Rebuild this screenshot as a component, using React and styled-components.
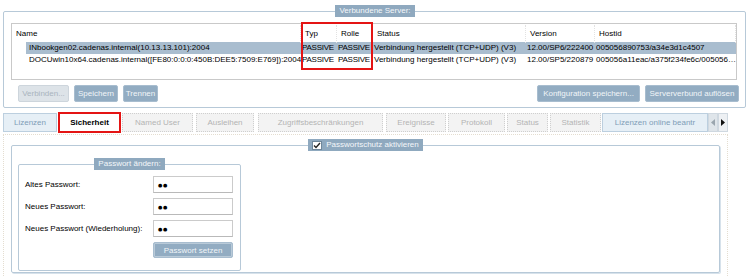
import React from 'react';
import styled, { createGlobalStyle, css } from 'styled-components';

const GlobalStyle = createGlobalStyle`
  body {
    margin: 0;
    background: #ffffff;
    font-family: "Liberation Sans", Arial, sans-serif;
    font-size: 8px;
    color: #000;
  }
`;

const Page = styled.div`
  width: 750px;
  height: 277px;
  box-sizing: border-box;
  padding: 5px 4px 0 3px;
  overflow: hidden;
`;

const Group = styled.fieldset`
  margin: 0;
  min-width: 0;
  border: 1px solid #b7c9d8;
  border-radius: 2px;
  padding: ${p => p.$pad};
  box-shadow: ${p => (p.$shadow ? '1px 1px 0 #d7e2eb' : 'none')};
`;

const Legend = styled.legend`
  margin: 0 auto;
  padding: 0 4px;
  height: 12px;
  line-height: 12px;
  background: #8fa9bf;
  color: #f4f7fa;
  display: flex;
  align-items: center;
  gap: 4px;
`;

const CheckBox = styled.span`
  width: 10px;
  height: 9px;
  background: #fff;
  border: 1px solid #6f879b;
  box-sizing: border-box;
  display: flex;
  align-items: center;
  justify-content: center;
`;

const TableWrap = styled.div`
  position: relative;
  margin-right: 2px;
  height: 57px;
  box-sizing: border-box;
  border: 1px solid #c9c9c9;
  background: #fff;
`;

const cols = '289px 36px 36px 153px 69px 1fr';

const HeadRow = styled.div`
  display: grid;
  grid-template-columns: ${cols};
  height: 17px;
  margin-top: 1px;
  align-items: center;
`;

const HeadCell = styled.div`
  padding-left: 4px;
  height: 100%;
  line-height: 18px;
  border-right: 1px dotted #e2e2e2;
  white-space: nowrap;
`;

const Row = styled.div`
  display: grid;
  grid-template-columns: ${cols};
  height: 12px;
  line-height: 12px;
  white-space: nowrap;
  background: ${p => (p.$selected ? 'linear-gradient(to right, transparent 14px, #a9bdcf 14px)' : 'transparent')};
`;

const Cell = styled.div`
  padding-left: ${p => p.$indent ?? 2}px;
  overflow: hidden;
  text-overflow: ${p => (p.$clip ? 'clip' : 'ellipsis')};
  letter-spacing: ${p => (p.$tight ? '-0.25px' : 'normal')};
`;

const RedMark = styled.div`
  position: absolute;
  left: 289px;
  top: -2px;
  width: 72px;
  height: 48px;
  border: 2px solid #e41414;
  box-sizing: border-box;
  pointer-events: none;
`;

const ButtonRow = styled.div`
  display: flex;
  justify-content: space-between;
  margin-top: 5px;
  padding-left: 7px;
`;

const ButtonGroup = styled.div`
  display: flex;
  gap: 5px;
`;

const Button = styled.button`
  font: inherit;
  height: 17px;
  width: ${p => p.$w}px;
  padding: 0;
  border-radius: 2px;
  white-space: nowrap;
  ${p =>
    p.disabled
      ? css`
          background: #dde3e8;
          border: 1px solid #cdd5dc;
          color: #a9b4be;
        `
      : css`
          background: #92acc2;
          border: 1px solid #a8bdcf;
          color: #f1f5f8;
        `}
`;

const TabStrip = styled.div`
  display: flex;
  align-items: center;
  margin-top: 4px;
  height: 21px;
`;

const Tab = styled.div`
  box-sizing: border-box;
  width: ${p => p.$w}px;
  margin-right: ${p => p.$gap ?? 2}px;
  height: 19px;
  line-height: 17px;
  text-align: center;
  white-space: nowrap;
  overflow: hidden;
  ${p =>
    p.$variant === 'active' &&
    css`
      height: 21px;
      line-height: 17px;
      background: #fff;
      border: 2px solid #e41414;
      font-weight: bold;
      color: #000;
    `}
  ${p =>
    p.$variant === 'info' &&
    css`
      background: #e6eff6;
      border: 1px solid #bccfdf;
      color: #7f9db7;
    `}
  ${p =>
    p.$variant === 'off' &&
    css`
      background: #f3f3f3;
      border: 1px dotted #cfcfcf;
      color: #b3b3b3;
    `}
`;

const Arrows = styled.div`
  display: flex;
  height: 19px;
`;

const Arrow = styled.div`
  width: 10px;
  height: 19px;
  box-sizing: border-box;
  border: 1px solid #cfd8e0;
  background: ${p => (p.$dim ? '#dfe5ea' : '#edf0f3')};
  display: flex;
  align-items: center;
  justify-content: center;
`;

const TabBody = styled.div`
  width: 725px;
  height: 152px;
  margin-top: 1px;
  box-sizing: border-box;
  border: 1px dotted #e4ddd0;
  border-bottom: none;
  padding: 4px 8px 0 7px;
`;

const PanelGroup = styled(Group)`
  width: 709px;
  height: 134px;
  box-sizing: border-box;
`;

const InnerGroup = styled(Group)`
  width: 223px;
  box-sizing: border-box;
`;

const Form = styled.div`
  display: grid;
  grid-template-columns: 128px 80px;
  grid-auto-rows: 17px;
  row-gap: 5px;
  align-items: center;
`;

const Label = styled.div`
  white-space: nowrap;
`;

const Input = styled.div`
  height: 17px;
  box-sizing: border-box;
  border: 1px solid #cbcbcb;
  border-bottom-color: #b9b9b9;
  background: #fff;
  padding-left: 4px;
  display: flex;
  align-items: center;
  font-family: "DejaVu Sans", sans-serif;
  font-size: 5px;
  letter-spacing: 0.6px;
`;

const SetButton = styled(Button)`
  grid-column: 2;
  width: 80px;
  height: 16px;
  margin-top: -1px;
  box-shadow: inset 0 0 0 1px #b9cad8;
`;

const Tri = ({ dir, color }) => (
  <svg width="4" height="7" viewBox="0 0 4 7">
    <path d={dir === 'left' ? 'M4 0 L0 3.5 L4 7 Z' : 'M0 0 L4 3.5 L0 7 Z'} fill={color} />
  </svg>
);

const tabs = [
  { label: 'Lizenzen', w: 54, v: 'info', gap: 1 },
  { label: 'Sicherheit', w: 63, v: 'active', gap: 1 },
  { label: 'Named User', w: 71, v: 'off', gap: 3 },
  { label: 'Ausleihen', w: 58, v: 'off', gap: 4 },
  { label: 'Zugriffsbeschränkungen', w: 125, v: 'off', gap: 3 },
  { label: 'Ereignisse', w: 60, v: 'off', gap: 2 },
  { label: 'Protokoll', w: 57, v: 'off', gap: 2 },
  { label: 'Status', w: 41, v: 'off', gap: 2 },
  { label: 'Statistik', w: 51, v: 'off', gap: 1 },
  { label: 'Lizenzen online beantr', w: 106, v: 'info', gap: 0 },
];

const servers = [
  {
    name: 'INbookgen02.cadenas.internal(10.13.13.101):2004',
    typ: 'PASSIVE',
    rolle: 'PASSIVE',
    status: 'Verbindung hergestellt (TCP+UDP) (V3)',
    version: '12.00/SP6/222400',
    hostid: '005056890753/a34e3d1c4507',
    selected: true,
  },
  {
    name: 'DOCUwin10x64.cadenas.internal([FE80:0:0:0:450B:DEE5:7509:E769]):2004',
    typ: 'PASSIVE',
    rolle: 'PASSIVE',
    status: 'Verbindung hergestellt (TCP+UDP) (V3)',
    version: '12.00/SP5/220879',
    hostid: '005056a11eac/a375f234fe6c/005056a11eac',
  },
];

const App = () => {
  return (
    <Page>
      <GlobalStyle />
      <Group $pad="6px 6px 5px 7px">
        <Legend>Verbundene Server:</Legend>
        <TableWrap>
          <HeadRow>
            <HeadCell>Name</HeadCell>
            <HeadCell>Typ</HeadCell>
            <HeadCell>Rolle</HeadCell>
            <HeadCell>Status</HeadCell>
            <HeadCell>Version</HeadCell>
            <HeadCell>Hostid</HeadCell>
          </HeadRow>
          {servers.map(s => (
            <Row key={s.name} $selected={s.selected}>
              <Cell $indent={17} $clip>{s.name}</Cell>
              <Cell $indent={1} $tight $clip>{s.typ}</Cell>
              <Cell $indent={1} $tight $clip>{s.rolle}</Cell>
              <Cell $indent={1} $clip>{s.status}</Cell>
              <Cell $indent={1} $clip>{s.version}</Cell>
              <Cell $indent={1}>{s.hostid}</Cell>
            </Row>
          ))}
          <RedMark />
        </TableWrap>
        <ButtonRow>
          <ButtonGroup>
            <Button disabled $w={51}>Verbinden...</Button>
            <Button $w={44}>Speichern</Button>
            <Button $w={35}>Trennen</Button>
          </ButtonGroup>
          <ButtonGroup>
            <Button $w={103}>Konfiguration speichern...</Button>
            <Button $w={94}>Serververbund auflösen</Button>
          </ButtonGroup>
        </ButtonRow>
      </Group>

      <TabStrip>
        {tabs.map(t => (
          <Tab key={t.label} $w={t.w} $variant={t.v} $gap={t.gap}>
            {t.label}
          </Tab>
        ))}
        <Arrows>
          <Arrow $dim>
            <Tri dir="left" color="#9aa5ae" />
          </Arrow>
          <Arrow>
            <Tri dir="right" color="#111" />
          </Arrow>
        </Arrows>
      </TabStrip>

      <TabBody>
        <PanelGroup $pad="7px 6px 6px 6px" $shadow>
          <Legend>
            <CheckBox>
              <svg width="8" height="7" viewBox="0 0 8 7">
                <path d="M1 3.5 L3 5.5 L7 1" stroke="#222" strokeWidth="1.4" fill="none" />
              </svg>
            </CheckBox>
            Passwortschutz aktivieren
          </Legend>
          <InnerGroup $pad="6px 6px 11px 6px">
            <Legend>Passwort ändern:</Legend>
            <Form>
              <Label>Altes Passwort:</Label>
              <Input>●●</Input>
              <Label>Neues Passwort:</Label>
              <Input>●●</Input>
              <Label>Neues Passwort (Wiederholung):</Label>
              <Input>●●</Input>
              <SetButton>Passwort setzen</SetButton>
            </Form>
          </InnerGroup>
        </PanelGroup>
      </TabBody>
    </Page>
  );
};

export default App;
